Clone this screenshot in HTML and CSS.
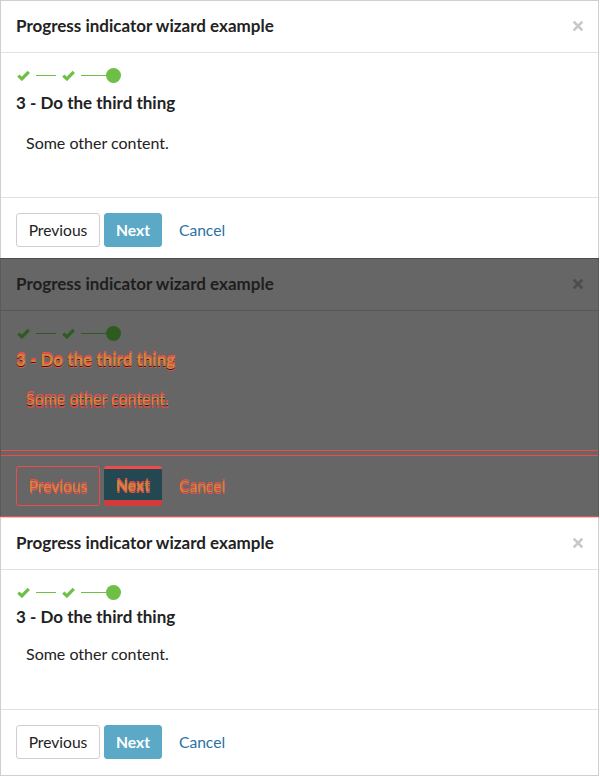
FILE: index.html
```html
<!DOCTYPE html>
<html lang="en">
<head>
<meta charset="utf-8">
<title>Progress indicator wizard example</title>
<link rel="stylesheet" href="styles.css">
</head>
<body>
<main class="stack">
  <section class="modal modal-a">
    <header class="modal-header">
      <h2 class="modal-title">Progress indicator wizard example</h2>
      <span class="close" aria-label="Close"><svg viewBox="0 0 10 10" width="10" height="10"><path d="M1.5 1.5 L8.5 8.5 M8.5 1.5 L1.5 8.5" stroke="currentColor" stroke-width="2.6" stroke-linecap="square"/></svg></span>
    </header>
    <div class="modal-body">
      <div class="progress">
        <svg class="check" viewBox="0 0 13 11" width="13" height="11"><path d="M1.3 5.6 L4.9 8.9 L11.8 1.9" fill="none" stroke="currentColor" stroke-width="3.2"/></svg>
        <span class="line line-short"></span>
        <svg class="check" viewBox="0 0 13 11" width="13" height="11"><path d="M1.3 5.6 L4.9 8.9 L11.8 1.9" fill="none" stroke="currentColor" stroke-width="3.2"/></svg>
        <span class="line line-long"></span>
        <span class="dot"></span>
      </div>
      <h3 class="step-title">3 - Do the third thing</h3>
      <p class="step-content">Some other content.</p>
    </div>
    <footer class="modal-footer">
      <button class="btn btn-default">Previous</button>
      <button class="btn btn-primary">Next</button>
      <a class="btn-link">Cancel</a>
    </footer>
  </section>

  <section class="modal modal-b ghost">
    <header class="modal-header">
      <h2 class="modal-title">Progress indicator wizard example</h2>
      <span class="close" aria-label="Close"><svg viewBox="0 0 10 10" width="10" height="10"><path d="M1.5 1.5 L8.5 8.5 M8.5 1.5 L1.5 8.5" stroke="currentColor" stroke-width="2.6" stroke-linecap="square"/></svg></span>
    </header>
    <div class="modal-body">
      <div class="progress">
        <svg class="check" viewBox="0 0 13 11" width="13" height="11"><path d="M1.3 5.6 L4.9 8.9 L11.8 1.9" fill="none" stroke="currentColor" stroke-width="3.2"/></svg>
        <span class="line line-short"></span>
        <svg class="check" viewBox="0 0 13 11" width="13" height="11"><path d="M1.3 5.6 L4.9 8.9 L11.8 1.9" fill="none" stroke="currentColor" stroke-width="3.2"/></svg>
        <span class="line line-long"></span>
        <span class="dot"></span>
      </div>
      <h3 class="step-title">3 - Do the third thing</h3>
      <p class="step-content">Some other content.</p>
    </div>
    <footer class="modal-footer">
      <button class="btn btn-default">Previous</button>
      <button class="btn btn-primary">Next</button>
      <a class="btn-link">Cancel</a>
    </footer>
  </section>

  <section class="modal modal-c">
    <header class="modal-header">
      <h2 class="modal-title">Progress indicator wizard example</h2>
      <span class="close" aria-label="Close"><svg viewBox="0 0 10 10" width="10" height="10"><path d="M1.5 1.5 L8.5 8.5 M8.5 1.5 L1.5 8.5" stroke="currentColor" stroke-width="2.6" stroke-linecap="square"/></svg></span>
    </header>
    <div class="modal-body">
      <div class="progress">
        <svg class="check" viewBox="0 0 13 11" width="13" height="11"><path d="M1.3 5.6 L4.9 8.9 L11.8 1.9" fill="none" stroke="currentColor" stroke-width="3.2"/></svg>
        <span class="line line-short"></span>
        <svg class="check" viewBox="0 0 13 11" width="13" height="11"><path d="M1.3 5.6 L4.9 8.9 L11.8 1.9" fill="none" stroke="currentColor" stroke-width="3.2"/></svg>
        <span class="line line-long"></span>
        <span class="dot"></span>
      </div>
      <h3 class="step-title">3 - Do the third thing</h3>
      <p class="step-content">Some other content.</p>
    </div>
    <footer class="modal-footer">
      <button class="btn btn-default">Previous</button>
      <button class="btn btn-primary">Next</button>
      <a class="btn-link">Cancel</a>
    </footer>
  </section>
</main>
</body>
</html>
```

FILE: styles.css
```css
* { box-sizing: border-box; }
html, body { margin: 0; padding: 0; background: #fff; }
body {
  font-family: Lato, "Open Sans", "Liberation Sans", sans-serif;
  color: #222;
  width: 600px;
  height: 777px;
  overflow: hidden;
}
.stack { display: flex; flex-direction: column; width: 599px; }

.modal {
  background: #fff;
  border: 1px solid #cfcfcf;
  border-bottom: none;
  overflow: hidden;
  display: flex;
  flex-direction: column;
  flex-shrink: 0;
}
.modal > * { flex-shrink: 0; }

.modal-header {
  height: 52px;
  border-bottom: 1px solid #e2e2e2;
  padding: 0 15px 1px 15px;
  display: flex;
  align-items: center;
  justify-content: space-between;
}
.modal-title {
  margin: 0;
  font-size: 17px;
  font-weight: 700;
  line-height: 22px;
  color: #222;
}
.close {
  display: flex;
  color: #c9c9c9;
}

.modal-body {
  padding: 14px 15px 0 15px;
  display: flex;
  flex-direction: column;
  align-items: flex-start;
}
.progress {
  display: flex;
  align-items: center;
  height: 16px;
  padding-left: 1px;
  color: #6dbf45;
}
.check { display: block; }
.line { height: 1px; background: #6dbf45; display: block; }
.line-short { width: 20px; margin: 0 6px 0 6px; }
.line-long { width: 25px; margin-left: 6px; }
.dot { width: 15px; height: 15px; border-radius: 50%; background: #6dbf45; display: block; }

.step-title {
  margin: 9px 0 0;
  font-size: 17px;
  line-height: 22px;
  font-weight: 700;
}
.step-content {
  margin: 19px 0 0 10px;
  font-size: 16px;
  line-height: 20px;
}

.modal-footer {
  border-top: 1px solid #e2e2e2;
  padding: 15px 15px 11px;
  display: flex;
  align-items: center;
  gap: 4px;
}
.btn {
  font-family: inherit;
  font-size: 15.6px;
  height: 34px;
  border-radius: 3px;
  padding: 0;
  margin: 0;
  cursor: pointer;
}
.btn-default {
  width: 84px;
  background: #fff;
  border: 1px solid #cfcfcf;
  color: #222;
}
.btn-primary {
  width: 58px;
  background: #5ba9c6;
  border: 1px solid #5ba9c6;
  color: #fff;
  font-weight: 700;
}
.btn-link {
  margin-left: 13px;
  font-size: 15.6px;
  color: #2a72a6;
}

/* modal heights */
.modal-a { height: 258px; }
.modal-a .modal-body { height: 144px; }

.modal-c { height: 259px; border-bottom: 1px solid #cfcfcf; }
.modal-c .modal-body { height: 139px; }
.modal-c .step-title { margin-top: 6px; }
.modal-c .step-content { margin-top: 16px; }
.modal-c .modal-footer { padding-bottom: 16px; }

/* ghost / diff overlay copy */
.ghost {
  height: 259px;
  background: #666;
  border-top: 1px solid #4c4c4c;
  border-bottom: 1px solid #f04a4a;
  border-left: 1px solid #5a5a5a;
  border-right: 1px solid #5a5a5a;
}
.ghost .modal-header { border-bottom-color: #575757; }
.ghost .modal-title { color: #1e1e1e; }
.ghost .close { color: #4d4d4d; }
.ghost .modal-body { height: 139px; }
.ghost .progress { color: #2e5b20; }
.ghost .line, .ghost .dot { background: #2e5b20; }
.ghost .step-title {
  margin-top: 8px;
  color: #c98a3a;
  text-shadow: 0 -2px 0 #ef4b4b, 0 1px 0 #1e1e1e, 0 2px 0 #ef4b4b;
}
.ghost .step-content {
  margin-top: 18px;
  color: #d08c3c;
  text-shadow: 0 -3px 0 #ef4b4b, 0 3px 0 #e14545, 0 1px 0 #222;
}
.ghost .modal-footer {
  position: relative;
  border-top: 1px solid #ef4b4b;
  padding-bottom: 9px;
}
.ghost .modal-footer::before {
  content: "";
  position: absolute;
  left: 0;
  right: 0;
  top: 4px;
  height: 1px;
  background: #ef4b4b;
}
.ghost .btn-default {
  background: transparent;
  border: 1px solid #ef4b4b;
  height: 40px;
  color: #d08c3c;
  text-shadow: 0 -2px 0 #ef4b4b, 0 2px 0 #ef4b4b;
}
.ghost .btn-primary {
  background: #244852;
  border: none;
  border-top: 3px solid #ef4b4b;
  border-bottom: 6px solid #d33c3c;
  height: 40px;
  color: #c98a3a;
  text-shadow: 0 -2px 0 #ef4b4b, 0 2px 0 #ef4b4b;
}
.ghost .btn-link {
  color: #c98a3a;
  text-shadow: 0 -2px 0 #ef4b4b, 0 2px 0 #ef4b4b;
}
```
